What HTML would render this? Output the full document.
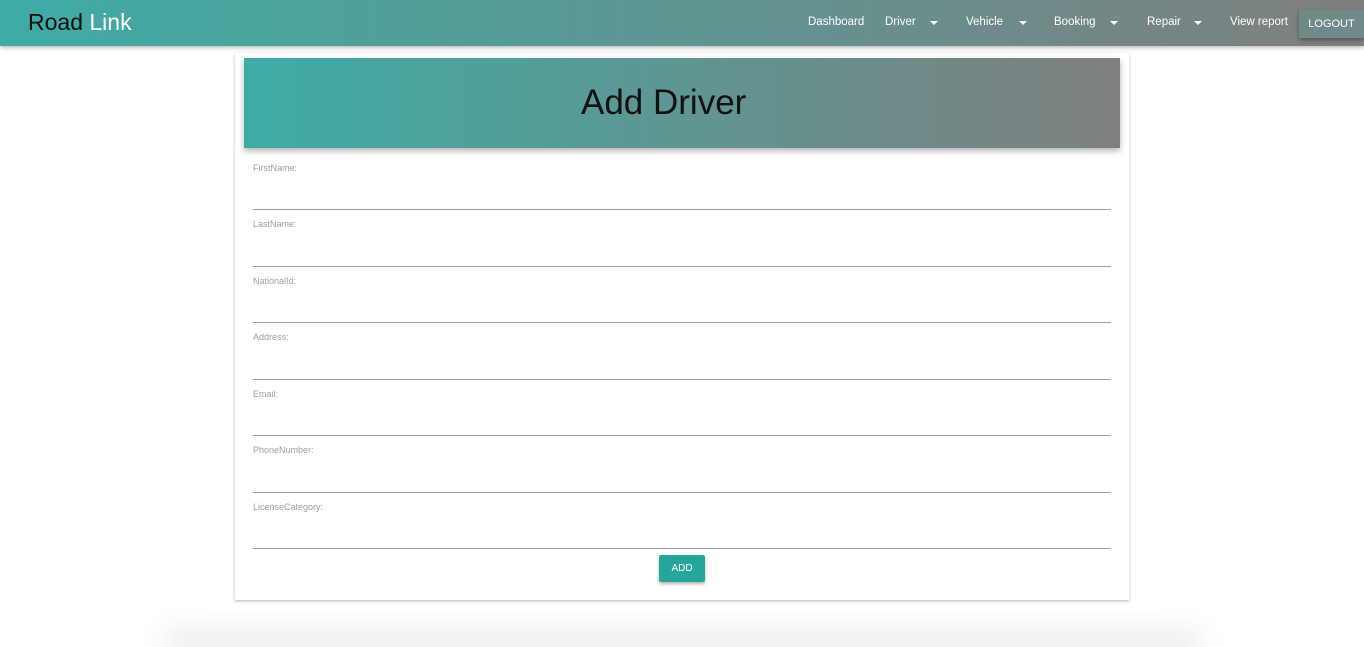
<!DOCTYPE html>
<html><head><style>
*{box-sizing:border-box;margin:0;padding:0}
html,body{width:1364px;height:647px;overflow:hidden}
body{background:#fff;font-family:"Liberation Sans",sans-serif;position:relative}
.nav{position:absolute;left:0;top:0;width:1364px;height:46px;background:linear-gradient(90deg,#3eaca5,#7f7f7f);box-shadow:0 2px 4px rgba(0,0,0,.25);z-index:2}
.brand{position:absolute;left:28px;top:9px;font-size:23px;color:#111}
.brand span{color:#fff}
.ni{position:absolute;top:16px;font-size:11.5px;color:#fff}
.car{position:absolute;top:21px;width:0;height:0;border-left:4px solid transparent;border-right:4px solid transparent;border-top:4px solid #fff}
.logout{position:absolute;left:1299px;top:10px;width:65px;height:28px;background:#6f8a88;color:#fff;font-size:11px;line-height:28px;text-align:center;box-shadow:0 2px 4px rgba(0,0,0,.35)}
.card{position:absolute;left:235px;top:53px;width:894px;height:547px;background:#fff;box-shadow:0 1px 3px rgba(0,0,0,.3)}
.head{position:absolute;left:244px;top:58px;width:876px;height:90px;background:linear-gradient(90deg,#3eaca5,#7f7f7f);box-shadow:0 3px 6px rgba(0,0,0,.3);font-size:35px;line-height:90px;color:#111}
.head span{position:absolute;left:337px}
.lbl{position:absolute;left:253px;font-size:9px;color:#9e9e9e}
.ln{position:absolute;left:253px;width:858px;height:1px;background:#9e9e9e}
.btn{position:absolute;left:659px;top:555px;width:46px;height:27px;background:#26a69a;color:#fff;font-size:10px;line-height:27px;text-align:center;border-radius:2px;box-shadow:0 2px 3px rgba(0,0,0,.3)}
.sh{position:absolute;left:170px;top:647px;width:1025px;height:0;box-shadow:0 -5px 30px 4px rgba(0,0,0,.25)}
</style></head><body>
<div class="nav">
<div class="brand">Road <span>Link</span></div>
<div class="ni" style="left:808px">Dashboard</div>
<div class="ni" style="left:885px">Driver</div><div class="car" style="left:930px"></div>
<div class="ni" style="left:966px">Vehicle</div><div class="car" style="left:1019px"></div>
<div class="ni" style="left:1054px">Booking</div><div class="car" style="left:1110px"></div>
<div class="ni" style="left:1147px">Repair</div><div class="car" style="left:1194px"></div>
<div class="ni" style="left:1230px">View report</div>
<div class="logout">LOGOUT</div>
</div>
<div class="card"></div>
<div class="head"><span>Add Driver</span></div>
<div class="lbl" style="top:163px">FirstName:</div><div class="ln" style="top:209px"></div>
<div class="lbl" style="top:219px">LastName:</div><div class="ln" style="top:266px"></div>
<div class="lbl" style="top:276px">NationalId:</div><div class="ln" style="top:322px"></div>
<div class="lbl" style="top:332px">Address:</div><div class="ln" style="top:379px"></div>
<div class="lbl" style="top:389px">Email:</div><div class="ln" style="top:435px"></div>
<div class="lbl" style="top:445px">PhoneNumber:</div><div class="ln" style="top:492px"></div>
<div class="lbl" style="top:502px">LicenseCategory:</div><div class="ln" style="top:548px"></div>
<div class="btn">ADD</div>
<div class="sh"></div>
</body></html>
